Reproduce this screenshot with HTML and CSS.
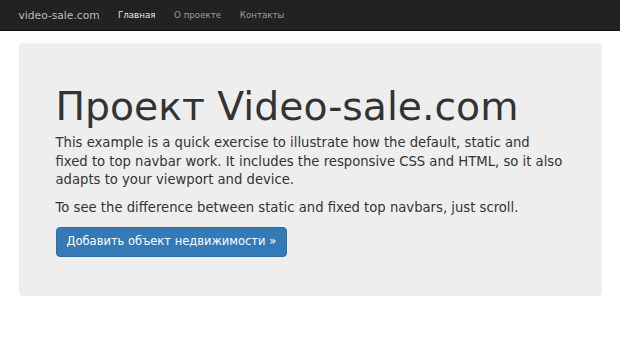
FILE: index.html
```html
<!DOCTYPE html>
<html lang="ru">
<head>
  <meta charset="UTF-8" />
  <meta name="viewport" content="width=device-width, initial-scale=1.0"/>
  <title>Video-sale.com</title>
  <link rel="stylesheet" href="styles.css">
</head>
<body>

<nav class="navbar">
  <div class="container navbar-inner">
    <a class="brand" href="#">video-sale.com</a>
    <ul class="nav">
      <li class="active"><a href="#">Главная</a></li>
      <li><a href="#">О проекте</a></li>
      <li><a href="#">Контакты</a></li>
    </ul>
  </div>
</nav>

<div class="container">
  <div class="jumbotron">
    <h1>Проект Video-sale.com</h1>
    <p>This example is a quick exercise to illustrate how the default, static and fixed to top navbar work. It includes the responsive CSS and HTML, so it also adapts to your viewport and device.</p>
    <p>To see the difference between static and fixed top navbars, just scroll.</p>
    <p><a class="btn" href="#">Добавить объект недвижимости &raquo;</a></p>
  </div>
</div>

</body>
</html>
```

FILE: styles.css
```css
* { box-sizing: border-box; margin: 0; padding: 0; }
body {
  background: #fff;
  font-family: "DejaVu Sans", sans-serif;
  font-size: 9px;
  color: #333;
}
a { text-decoration: none; }
.container {
  width: 601px;
  margin: 0 auto;
  padding: 0 9px;
}
.navbar {
  background-color: #222;
  border-bottom: 1px solid #111;
  height: 31px;
  margin-bottom: 12px;
}
.navbar-inner {
  display: flex;
  align-items: stretch;
  height: 100%;
}
.brand {
  font-size: 10.7px;
  color: #bbb;
  padding: 0 9px;
  margin-left: -9px;
  display: flex;
  align-items: center;
}
.nav {
  list-style: none;
  display: flex;
}
.nav li a {
  display: flex;
  align-items: center;
  height: 100%;
  padding: 0 9.3px;
  font-size: 8.7px;
  color: #9d9d9d;
}
.nav li.active a {
  color: #e8e8e8;
}
.jumbotron {
  background-color: #eee;
  border-radius: 4px;
  padding: 30px 37px;
}
.jumbotron h1 {
  font-size: 39.3px;
  font-weight: 500;
  line-height: 1.1;
  margin-top: 12px;
  margin-bottom: 6px;
}
.jumbotron p {
  font-size: 13.2px;
  line-height: 18.6px;
  margin-bottom: 9.3px;
}
.btn {
  display: inline-block;
  font-size: 11.5px;
  line-height: 1.3;
  padding: 6.2px 10px;
  color: #fff;
  background-color: #337ab7;
  border: 1px solid #2e6da4;
  border-radius: 4px;
}
```
